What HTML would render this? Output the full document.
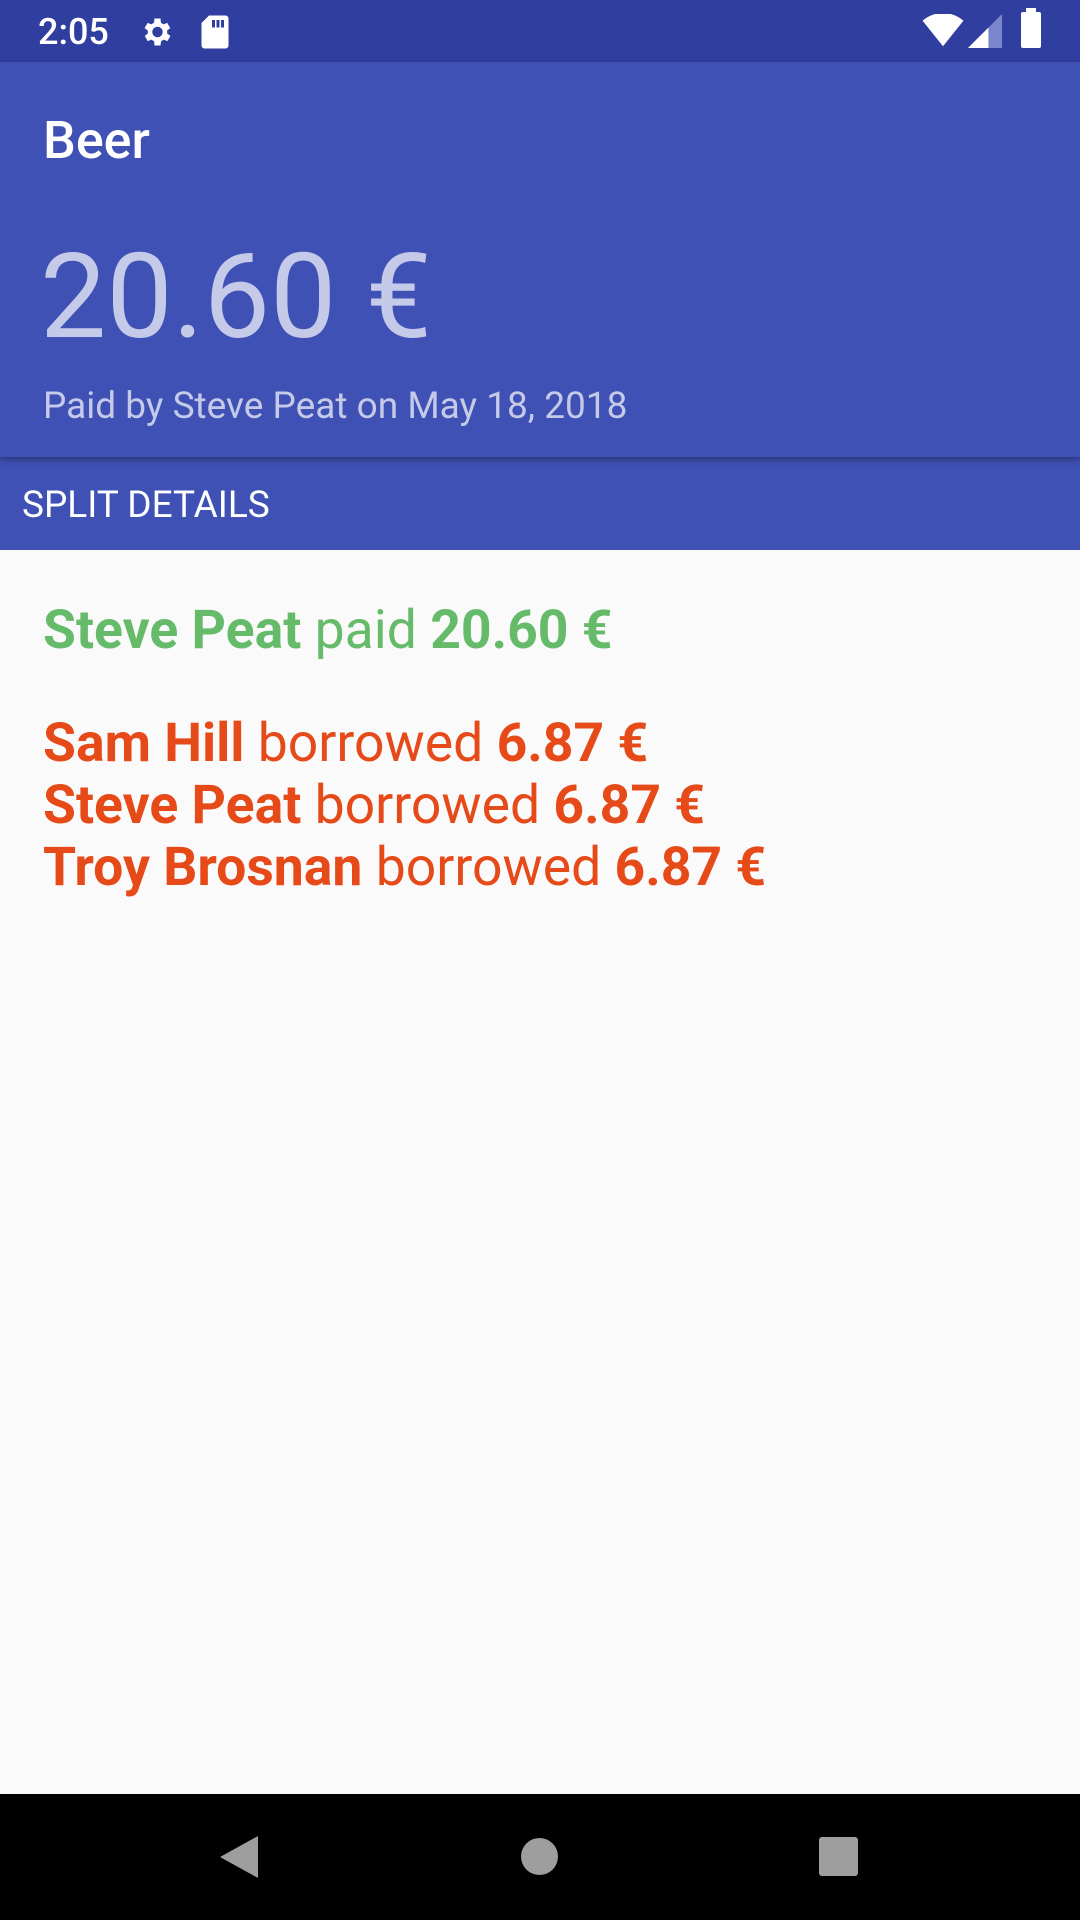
<!DOCTYPE html>
<html><head><meta charset="utf-8"><style>
body{margin:0;width:1080px;height:1920px;background:#FAFAFA;font-family:"Roboto","Liberation Sans",sans-serif;position:relative;overflow:hidden}
.a{position:absolute;white-space:nowrap}
</style></head><body>
<div class="a" style="left:0;top:0;width:1080px;height:62px;background:#303F9F"></div>
<div class="a" style="left:38px;top:11px;color:#fff;font-size:36px;line-height:42px;font-weight:500">2:05</div>
<svg class="a" style="left:138px;top:14px" width="36" height="36" viewBox="0 0 24 24"><path fill="#fff" d="M19.4 13a7.5 7.5 0 000-2l2.1-1.6-2-3.5-2.5 1a7 7 0 00-1.7-1L15 3h-4l-.4 2.9a7 7 0 00-1.7 1l-2.5-1-2 3.5L6.6 11a7.5 7.5 0 000 2l-2.1 1.6 2 3.5 2.5-1a7 7 0 001.7 1L11 21h4l.4-2.9a7 7 0 001.7-1l2.5 1 2-3.5zM13 15.5a3.5 3.5 0 110-7 3.5 3.5 0 010 7z"/></svg>
<svg class="a" style="left:200px;top:14px" width="30" height="36" viewBox="0 0 20 24"><path fill="#fff" d="M6 1h11a2 2 0 012 2v18a2 2 0 01-2 2H3a2 2 0 01-2-2V6zM8 4v5h2V4zm3 0v5h2V4zm3 0v5h2V4z"/></svg>
<svg class="a" style="left:922px;top:14px" width="42" height="34" viewBox="0 0 24 20"><path fill="#fff" d="M12 19L0 4a18 18 0 0124 0z"/></svg>
<svg class="a" style="left:968px;top:14px" width="34" height="34" viewBox="0 0 20 20"><path fill="#7986CB" d="M20 0v20H0z"/><path fill="#fff" d="M12 8v12H0z"/></svg>
<div class="a" style="left:1021px;top:12px;width:20px;height:36px;background:#fff;border-radius:2px"></div>
<div class="a" style="left:1026px;top:8px;width:10px;height:6px;background:#fff"></div>
<div class="a" style="left:0;top:62px;width:1080px;height:395px;background:#3F51B5;box-shadow:0 3px 6px rgba(0,0,0,.35);z-index:1"></div>
<div class="a" style="left:43px;top:109px;color:#fff;font-size:52px;line-height:64px;font-weight:500;z-index:2">Beer</div>
<div class="a" style="left:40px;top:227px;color:#C5CAE9;font-size:118px;line-height:140px;z-index:2">20.60 €</div>
<div class="a" style="left:43px;top:382px;color:#C5CAE9;font-size:37px;line-height:50px;z-index:2">Paid by Steve Peat on May 18, 2018</div>
<div class="a" style="left:0;top:457px;width:1080px;height:93px;background:#3F51B5"></div>
<div class="a" style="left:22px;top:483px;color:#fff;font-size:37px;line-height:46px">SPLIT DETAILS</div>
<div class="a" style="left:43px;top:599px;color:#66BB6A;font-size:53.5px;line-height:64px"><b>Steve Peat</b> paid <b>20.60 €</b></div>
<div class="a" style="left:43px;top:713px;color:#E64A19;font-size:53.5px;line-height:62px"><b>Sam Hill</b> borrowed <b>6.87 €</b><br><b>Steve Peat</b> borrowed <b>6.87 €</b><br><b>Troy Brosnan</b> borrowed <b>6.87 €</b></div>
<div class="a" style="left:0;top:1794px;width:1080px;height:126px;background:#000"></div>
<svg class="a" style="left:218px;top:1834px" width="42" height="46" viewBox="0 0 42 46"><path fill="#9E9E9E" d="M40 2v42L2 23z"/></svg>
<div class="a" style="left:521px;top:1838px;width:37px;height:37px;border-radius:50%;background:#9E9E9E"></div>
<div class="a" style="left:819px;top:1837px;width:39px;height:39px;border-radius:3px;background:#9E9E9E"></div>
</body></html>
